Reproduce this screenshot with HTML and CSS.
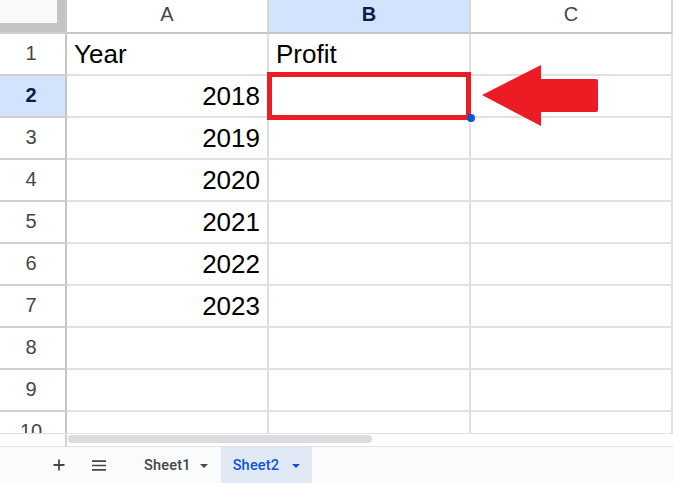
FILE: index.html
```html
<!DOCTYPE html>
<html>
<head>
<meta charset="utf-8">
<link rel="stylesheet" href="styles.css">
</head>
<body>
<div class="sheet">
  <div class="grid">
    <div class="corner"><div class="corner-inner"></div></div>
    <div class="colhead">A</div>
    <div class="colhead sel">B</div>
    <div class="colhead">C</div>

    <div class="rowhead">1</div><div class="cell">Year</div><div class="cell">Profit</div><div class="cell"></div>
    <div class="rowhead sel">2</div><div class="cell num">2018</div><div class="cell"></div><div class="cell"></div>
    <div class="rowhead">3</div><div class="cell num">2019</div><div class="cell"></div><div class="cell"></div>
    <div class="rowhead">4</div><div class="cell num">2020</div><div class="cell"></div><div class="cell"></div>
    <div class="rowhead">5</div><div class="cell num">2021</div><div class="cell"></div><div class="cell"></div>
    <div class="rowhead">6</div><div class="cell num">2022</div><div class="cell"></div><div class="cell"></div>
    <div class="rowhead">7</div><div class="cell num">2023</div><div class="cell"></div><div class="cell"></div>
    <div class="rowhead">8</div><div class="cell"></div><div class="cell"></div><div class="cell"></div>
    <div class="rowhead">9</div><div class="cell"></div><div class="cell"></div><div class="cell"></div>
    <div class="rowhead">10</div><div class="cell"></div><div class="cell"></div><div class="cell"></div>
  </div>

  <div class="hscroll">
    <div class="hs-gutter"></div>
    <div class="hs-track"><div class="hs-thumb"></div></div>
  </div>

  <div class="tabbar">
    <div class="tb-btn plus">
      <svg width="12" height="12" viewBox="0 0 12 12"><path d="M6 0.5V11.5M0.5 6H11.5" stroke="#444746" stroke-width="1.8" fill="none"/></svg>
    </div>
    <div class="tb-btn menu">
      <svg width="14" height="11" viewBox="0 0 14 11"><path d="M0 1.2H14M0 5.5H14M0 9.8H14" stroke="#444746" stroke-width="1.7" fill="none"/></svg>
    </div>
    <div class="tab first">
      <span class="tab-name">Sheet1</span>
      <svg class="caret" width="8" height="4" viewBox="0 0 8 4"><path d="M0 0H8L4 4Z" fill="#444746"/></svg>
    </div>
    <div class="tab active">
      <span class="tab-name">Sheet2</span>
      <svg class="caret" width="8" height="4" viewBox="0 0 8 4"><path d="M0 0H8L4 4Z" fill="#0b57d0"/></svg>
    </div>
  </div>

  <div class="sel-box"></div>
  <div class="fill-handle"></div>
  <svg class="arrow" width="120" height="66" viewBox="0 0 120 66">
    <path d="M2 32 L61 2 L61 16 L116 16 Q118 16 118 18 L118 47 Q118 49 116 49 L61 49 L61 63 Z" fill="#ed1c24"/>
  </svg>
</div>
</body>
</html>
```
FILE: styles.css
```css
* { box-sizing: border-box; }
html, body { margin: 0; padding: 0; background: #fff; }

.sheet {
  position: relative;
  width: 673px;
  height: 483px;
  overflow: hidden;
  font-family: "Liberation Sans", Arial, sans-serif;
}

.grid {
  display: grid;
  grid-template-columns: 67px 202px 202px 202px;
  grid-template-rows: 34px repeat(10, 42px);
  height: 433px;
  overflow: hidden;
}

.corner {
  background: #c4c4c4;
  border-right: 2px solid #c4c7c5;
  border-bottom: 2px solid #d0d0d0;
}
.corner-inner {
  width: 57px;
  height: 23px;
  background: #f8f9fa;
}

.colhead {
  display: flex;
  align-items: center;
  justify-content: center;
  padding-bottom: 3px;
  font-size: 20px;
  color: #444746;
  background: #fff;
  border-right: 2px solid #d6d6d6;
  border-bottom: 2px solid #c4c7c5;
}
.colhead.sel {
  background: #d3e3fd;
  color: #041e49;
  font-weight: 700;
}

.rowhead {
  display: flex;
  align-items: center;
  justify-content: center;
  padding-right: 3px;
  padding-bottom: 1px;
  font-size: 20px;
  color: #444746;
  background: #fff;
  border-right: 2px solid #c4c7c5;
  border-bottom: 2px solid #d0d0d0;
}
.rowhead.sel {
  background: #d3e3fd;
  color: #041e49;
  font-weight: 700;
}

.cell {
  display: flex;
  align-items: center;
  padding: 0 7px;
  font-size: 26px;
  color: #000;
  border-right: 2px solid #e1e1e1;
  border-bottom: 2px solid #e1e1e1;
  white-space: nowrap;
}
.cell.num { justify-content: flex-end; }

.hscroll {
  display: flex;
  height: 13px;
  border-top: 1px solid #e1e1e1;
}
.hs-gutter {
  width: 67px;
  border-right: 2px solid #d0d0d0;
}
.hs-track {
  flex: 1;
  padding: 1px 1px 0 1px;
}
.hs-thumb {
  width: 304px;
  height: 8px;
  border-radius: 4px;
  background: #dadce0;
}

.tabbar {
  display: flex;
  align-items: stretch;
  height: 37px;
  border-top: 1px solid #e1e3e1;
  background: #f9fbfd;
}
.tb-btn {
  width: 36px;
  display: flex;
  align-items: center;
  justify-content: center;
}
.tb-btn.plus { margin-left: 41px; }
.tb-btn.menu { margin-left: 4px; }

.tab {
  display: flex;
  align-items: center;
  padding: 0 12px;
  font-family: Roboto, "Liberation Sans", sans-serif;
  font-weight: 500;
  font-size: 14.5px;
  letter-spacing: 0.2px;
  color: #444746;
}
.tab.first { margin-left: 15px; padding-right: 13px; }
.tab.first .caret { margin-left: 9px; }
.tab .caret { margin-top: 1px; }
.tab.active {
  background: #e1e9f7;
  color: #0b57d0;
}
.tab.active .caret { margin-left: 13px; }

.sel-box {
  position: absolute;
  left: 267px;
  top: 72px;
  width: 204px;
  height: 48px;
  border: 5px solid #ed1c24;
}
.fill-handle {
  position: absolute;
  left: 467px;
  top: 114px;
  width: 8px;
  height: 8px;
  border-radius: 50%;
  background: #0b57d0;
}
.arrow {
  position: absolute;
  left: 480px;
  top: 63px;
}
```
